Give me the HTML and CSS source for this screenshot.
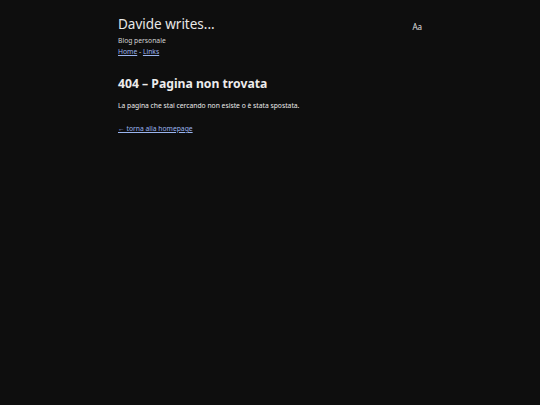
FILE: index.html
```html
<!DOCTYPE html>
<html lang="it">
<head>
<meta charset="utf-8">
<title>404 – Pagina non trovata</title>
<link rel="stylesheet" href="styles.css">
</head>
<body>
<div class="wrap">
  <header class="site-header">
    <div class="brand">
      <h1 class="site-title">Davide writes...</h1>
      <p class="tagline">Blog personale</p>
      <nav class="nav"><a href="#">Home</a> - <a href="#">Links</a></nav>
    </div>
    <button class="font-toggle" type="button">Aa</button>
  </header>
  <main class="content">
    <h2 class="page-title">404 – Pagina non trovata</h2>
    <p class="message">La pagina che stai cercando non esiste o è stata spostata.</p>
    <p class="back"><a href="#">← torna alla homepage</a></p>
  </main>
</div>
</body>
</html>
```
FILE: styles.css
```css
html, body {
  margin: 0;
  padding: 0;
  background: #0e0e0e;
  color: #e6e6e6;
  font-family: "Noto Sans", "Open Sans", sans-serif;
}
.wrap {
  width: 304px;
  margin: 0 auto;
  padding-top: 14px;
}
.site-header {
  display: flex;
  justify-content: space-between;
  align-items: flex-start;
}
.site-title {
  margin: 0;
  font-size: 13.5px;
  font-weight: 400;
  line-height: 20px;
  color: #e8e8e8;
}
.tagline {
  margin: 1px 0 0;
  font-size: 6.75px;
  line-height: 11px;
  color: #d4d4d4;
}
.nav {
  font-size: 6.75px;
  line-height: 11px;
  color: #d4d4d4;
}
a {
  color: #9ab4ee;
  text-decoration: underline;
}
.font-toggle {
  margin-top: 7px;
  padding: 0;
  background: none;
  border: 0;
  color: #e0e0e0;
  font-family: inherit;
  font-size: 8px;
  line-height: 12px;
}
.content {
  margin-top: 18px;
}
.page-title {
  margin: 0;
  font-size: 12.2px;
  font-weight: 700;
  line-height: 18px;
  color: #ececec;
}
.message {
  margin: 7px 0 0;
  font-size: 6.75px;
  line-height: 11px;
  color: #ececec;
}
.back {
  margin: 12px 0 0;
  font-size: 6.75px;
  line-height: 11px;
}
```
